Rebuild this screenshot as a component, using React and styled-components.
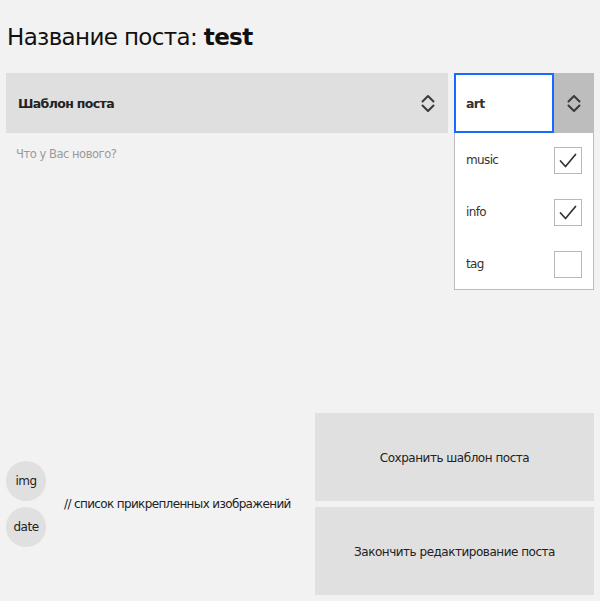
import React from "react";
import styled, { createGlobalStyle } from "styled-components";

const Global = createGlobalStyle`
  html, body { margin: 0; padding: 0; background: #f2f2f2; }
  body { font-family: "DejaVu Sans", Tahoma, sans-serif; color: #222; letter-spacing: -0.04em; }
  * { box-sizing: border-box; }
  button, textarea { letter-spacing: -0.04em; }
`;

const Page = styled.div`
  min-height: 601px;
  padding: 0 6px 6px;
  display: flex;
  flex-direction: column;
`;

const Title = styled.h1`
  margin: 0;
  padding: 22px 1px 0;
  height: 73px;
  font-size: 23px;
  font-weight: normal;
  line-height: 30px;
  color: #111;
  b { font-weight: bold; }
`;

const SelectRow = styled.div`
  display: grid;
  grid-template-columns: 1fr 140px;
  gap: 6px;
  height: 60px;
`;

const TemplateSelect = styled.div`
  background: #dfdfdf;
  display: flex;
  align-items: center;
  justify-content: space-between;
  padding: 0 13px 0 12px;
  font-size: 12.5px;
  font-weight: bold;
  color: #222;
`;

const TagSelect = styled.div`
  position: relative;
  display: grid;
  grid-template-columns: 1fr 40px;
`;

const TagField = styled.div`
  background: #fff;
  border: 2px solid #166bff;
  display: flex;
  align-items: center;
  padding-left: 10px;
  font-size: 12.5px;
  font-weight: bold;
  color: #333;
`;

const ChevronButton = styled.div`
  background: #bdbdbd;
  display: flex;
  align-items: center;
  justify-content: center;
`;

const Dropdown = styled.ul`
  position: absolute;
  top: 60px;
  left: 0;
  right: 0;
  margin: 0;
  padding: 0;
  list-style: none;
  background: #fff;
  border: 1px solid #bcbcbc;
  border-top: none;
  z-index: 2;
`;

const Option = styled.li`
  height: 52px;
  display: flex;
  align-items: center;
  justify-content: space-between;
  padding: 2px 11px 0 11px;
  font-size: 12px;
  color: #333;
`;

const CheckBox = styled.span`
  width: 28px;
  height: 27px;
  border: 1px solid #b9b9b9;
  background: #fff;
  display: flex;
  align-items: center;
  justify-content: center;
`;

const TextArea = styled.textarea`
  flex: 1;
  border: none;
  background: transparent;
  resize: none;
  outline: none;
  padding: 14px 10px;
  font-family: "DejaVu Sans", Tahoma, sans-serif;
  font-size: 11.5px;
  color: #333;
  &::placeholder { color: #9a9a9a; }
`;

const Bottom = styled.div`
  display: grid;
  grid-template-columns: 1fr 279px;
  gap: 6px;
  align-items: center;
`;

const Attachments = styled.div`
  display: flex;
  align-items: center;
  gap: 18px;
`;

const Chips = styled.div`
  display: flex;
  flex-direction: column;
  gap: 6px;
`;

const Chip = styled.button`
  width: 40px;
  height: 40px;
  border-radius: 50%;
  border: none;
  background: #e0e0e0;
  padding: 0;
  font-family: "DejaVu Sans", Tahoma, sans-serif;
  font-size: 12px;
  color: #222;
`;

const Note = styled.span`
  font-size: 12px;
  color: #222;
  white-space: nowrap;
`;

const Actions = styled.div`
  display: flex;
  flex-direction: column;
  gap: 6px;
  padding-top: 1px;
`;

const ActionButton = styled.button`
  height: 88px;
  border: none;
  background: #e0e0e0;
  padding: 2px 0 0;
  font-family: "DejaVu Sans", Tahoma, sans-serif;
  font-size: 12px;
  color: #222;
`;

const Chevrons = () => (
  <svg width="14" height="19" viewBox="0 0 14 19" fill="none" stroke="#3a3a3a" strokeWidth="2" strokeLinecap="round" strokeLinejoin="round">
    <path d="M1.5 7.5 L7 2 L12.5 7.5" />
    <path d="M1.5 11.5 L7 17 L12.5 11.5" />
  </svg>
);

const Check = () => (
  <svg width="18" height="15" viewBox="0 0 18 15" fill="none" stroke="#333" strokeWidth="1.7" strokeLinecap="round" strokeLinejoin="round">
    <path d="M1.5 8 L6.5 13.5 L16.5 1.5" />
  </svg>
);

const options = [
  { label: "music", checked: true },
  { label: "info", checked: true },
  { label: "tag", checked: false },
];

export default function App() {
  return (
    <>
      <Global />
      <Page>
        <Title>
          Название поста: <b>test</b>
        </Title>
        <SelectRow>
          <TemplateSelect>
            <span>Шаблон поста</span>
            <Chevrons />
          </TemplateSelect>
          <TagSelect>
            <TagField>art</TagField>
            <ChevronButton>
              <Chevrons />
            </ChevronButton>
            <Dropdown>
              {options.map((o) => (
                <Option key={o.label}>
                  <span>{o.label}</span>
                  <CheckBox>{o.checked && <Check />}</CheckBox>
                </Option>
              ))}
            </Dropdown>
          </TagSelect>
        </SelectRow>
        <TextArea placeholder="Что у Вас нового?" />
        <Bottom>
          <Attachments>
            <Chips>
              <Chip>img</Chip>
              <Chip>date</Chip>
            </Chips>
            <Note>// список прикрепленных изображений</Note>
          </Attachments>
          <Actions>
            <ActionButton>Сохранить шаблон поста</ActionButton>
            <ActionButton>Закончить редактирование поста</ActionButton>
          </Actions>
        </Bottom>
      </Page>
    </>
  );
}
